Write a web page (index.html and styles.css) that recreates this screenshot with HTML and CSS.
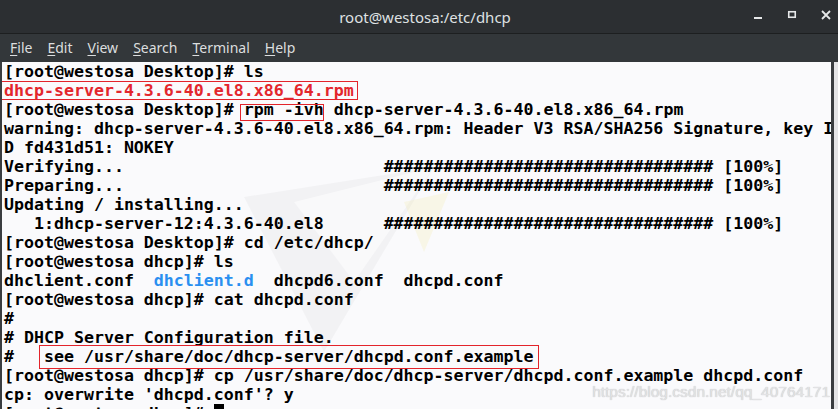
FILE: index.html
```html
<!DOCTYPE html>
<html lang="en">
  <head>
    <meta charset="UTF-8" />
    <meta name="viewport" content="width=device-width, initial-scale=1.0" />
    <title>root@westosa:/etc/dhcp</title>
    <link rel="stylesheet" href="styles.css">
  </head>
  <body>
    <div class="window">
      <header class="titlebar">
        <span class="title">root@westosa:/etc/dhcp</span>
        <div class="controls">
          <svg width="16" height="16" viewBox="0 0 16 16"><rect x="4" y="10" width="8" height="2" fill="#e6e8e9"/></svg>
          <svg width="16" height="16" viewBox="0 0 16 16"><rect x="4.75" y="4.75" width="6.5" height="5.5" fill="none" stroke="#e6e8e9" stroke-width="1.6"/></svg>
          <svg width="16" height="16" viewBox="0 0 16 16"><path d="M4 4 L12 12 M12 4 L4 12" stroke="#e6e8e9" stroke-width="1.8"/></svg>
        </div>
      </header>
      <nav class="menubar">
        <span><u>F</u>ile</span>
        <span><u>E</u>dit</span>
        <span><u>V</u>iew</span>
        <span><u>S</u>earch</span>
        <span><u>T</u>erminal</span>
        <span><u>H</u>elp</span>
      </nav>
      <div class="term">
        <svg class="logo" width="300" height="220" viewBox="0 0 300 220">
          <polygon points="10,35 200,5 90,190" fill="#000" opacity="0.03"/>
          <polygon points="60,40 200,5 120,120" fill="#fff" opacity="0.5"/>
          <polygon points="170,40 215,30 190,90" fill="#f2e9a0" opacity="0.22"/>
        </svg>
<pre class="screen">[root@westosa Desktop]# ls
<span class="red box box-a">dhcp-server-4.3.6-40.el8.x86_64.rpm</span>
[root@westosa Desktop]# <span class="box box-b">rpm -ivh</span> dhcp-server-4.3.6-40.el8.x86_64.rpm
warning: dhcp-server-4.3.6-40.el8.x86_64.rpm: Header V3 RSA/SHA256 Signature, key I
D fd431d51: NOKEY
Verifying...                          ################################# [100%]
Preparing...                          ################################# [100%]
Updating / installing...
   1:dhcp-server-12:4.3.6-40.el8      ################################# [100%]
[root@westosa Desktop]# cd /etc/dhcp/
[root@westosa dhcp]# ls
dhclient.conf  <span class="blue">dhclient.d</span>  dhcpd6.conf  dhcpd.conf
[root@westosa dhcp]# cat dhcpd.conf
#
# DHCP Server Configuration file.
#   <span class="box box-c">see /usr/share/doc/dhcp-server/dhcpd.conf.example</span>
[root@westosa dhcp]# cp /usr/share/doc/dhcp-server/dhcpd.conf.example dhcpd.conf
cp: overwrite 'dhcpd.conf'? y
[root@westosa dhcp]# <span class="cursor"> </span></pre>
        <div class="scroll"></div>
        <span class="mark">https://blog.csdn.net/qq_40764171</span>
      </div>
    </div>
  </body>
</html>
```

FILE: styles.css
```css
body {
  margin: 0;
  width: 838px;
  height: 409px;
  overflow: hidden;
  background: #2d3033;
}
.window {
  display: flex;
  flex-direction: column;
  height: 409px;
}
.titlebar {
  height: 33px;
  background: #2c2f32;
  border-bottom: 1px solid #1d1f20;
  display: grid;
  grid-template-columns: 1fr auto 1fr;
  align-items: center;
  font-family: "Noto Sans", "DejaVu Sans", sans-serif;
  font-size: 15px;
  color: #dfe1e2;
}
.title {
  grid-column: 2;
  padding-left: 12px;
}
.controls {
  grid-column: 3;
  justify-self: end;
  display: flex;
  gap: 18px;
  padding-right: 4px;
  margin-top: -4px;
}
.menubar {
  height: 28px;
  background: #33373a;
  display: flex;
  align-items: center;
  gap: 15px;
  padding-left: 10px;
  padding-bottom: 1px;
  box-sizing: border-box;
  font-family: "Noto Sans", "DejaVu Sans", sans-serif;
  font-size: 14px;
  color: #dcdedf;
}
.menubar u {
  text-underline-offset: 2px;
}
.term {
  flex: 1;
  display: flex;
  position: relative;
  background: #fafafc;
  border-left: 2px solid #3a3d40;
  overflow: hidden;
}
.screen {
  flex: 1;
  min-width: 0;
  margin: 0;
  padding-left: 2px;
  font-family: "DejaVu Sans Mono", monospace;
  font-weight: bold;
  font-size: 16.6px;
  line-height: 19px;
  color: #000;
  position: relative;
  overflow: hidden;
}
.red {
  color: #e3262c;
}
.blue {
  color: #2a8ff0;
}
.box {
  position: relative;
}
.box::after {
  content: "";
  position: absolute;
  border: 1.5px solid #e3242b;
}
.box-a::after {
  top: 0;
  bottom: 0;
  left: -4px;
  right: -4px;
}
.box-b::after {
  top: 4px;
  bottom: -2px;
  left: -4px;
  right: 0;
}
.box-c::after {
  top: -2px;
  bottom: -3px;
  left: -5px;
  right: -5px;
}
.cursor {
  background: #000;
}
.scroll {
  width: 7px;
  border-left: 3px solid #3a3d40;
  box-sizing: border-box;
  background: #e4e4e6;
}
.logo {
  position: absolute;
  left: 232px;
  top: 100px;
}
.mark {
  position: absolute;
  right: 8px;
  bottom: 8px;
  font-family: "Liberation Sans", Arial, sans-serif;
  font-size: 15.5px;
  color: #e2e2e4;
  text-shadow: 0 0 1px #b8b8ba;
}
```
